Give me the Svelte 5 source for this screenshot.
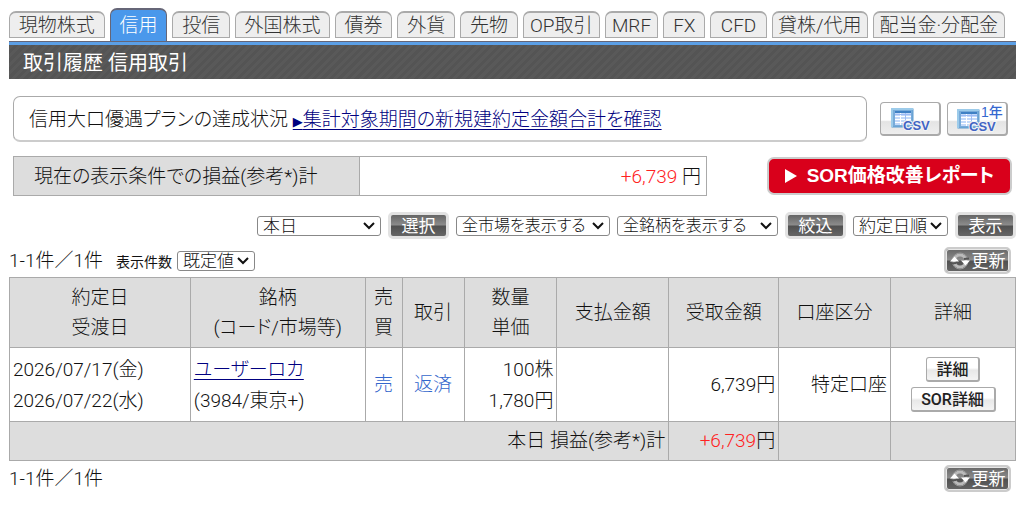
<script>
  const tabs = [
    { label: '現物株式', size: 96 },
    { label: '信用', size: 58, active: true },
    { label: '投信', size: 58 },
    { label: '外国株式', size: 95 },
    { label: '債券', size: 58 },
    { label: '外貨', size: 58 },
    { label: '先物', size: 58 },
    { label: 'OP取引', size: 77 },
    { label: 'MRF', size: 54 },
    { label: 'FX', size: 42 },
    { label: 'CFD', size: 57 },
    { label: '貸株/代用', size: 96 },
    { label: '配当金·分配金', size: 133 }
  ];
  const tabColumns = tabs.map((t) => `${t.size}fr`).join(' ');
  const columns = [181, 175, 37, 62, 93, 112, 110, 112, 125];
  const total = columns.reduce((a, b) => a + b, 0);
</script>

{#snippet refresh()}
  <button class="dark refresh">
    <svg width="20" height="20" viewBox="0 0 20 20" aria-hidden="true">
      <circle cx="10" cy="10" r="6" fill="none" stroke="#bbb" stroke-width="3" />
      <circle cx="10" cy="10" r="8" fill="none" stroke="#999" stroke-width="1" />
      <path d="M0 10.500L4.500 5.500L9 10.500Z M11 9.500L15.500 14.500L20 9.500Z" fill="#fff" />
      <path d="M1 12.500L6 12 M14 8L19 7.500" stroke="#555" stroke-width="2" />
    </svg><span>更新</span>
  </button>
{/snippet}

{#snippet sheet()}
  <rect x="1" y="1" width="21" height="18" fill="#78abd9" stroke="#5d9bd0" />
  <path d="M1 19V1H22" fill="none" stroke="#9ccbea" stroke-width="2" />
  <rect x="4" y="4" width="16" height="13" fill="#c3d9fa" />
  <rect x="4" y="3" width="16" height="2" fill="#3f80c4" />
  <path d="M4 8.500H20M4 11.500H20M4 14.500H20M9.500 5V17" stroke="#fff" />
  <path d="M4 6.500H20M14.500 5V17" stroke="#9fbcf5" />
{/snippet}

<main>
  <nav style:grid-template-columns={tabColumns}>
    {#each tabs as tab}
      <a href="#top" class:active={tab.active}>{tab.label}</a>
    {/each}
  </nav>
  <h1>取引履歴 信用取引</h1>

  <div class="notice">
    <p>信用大口優遇プランの達成状況 <a href="#plan"><span class="arrow">▶</span>集計対象期間の新規建約定金額合計を確認</a></p>
    <button class="csv" aria-label="CSV">
      <svg width="58" height="31" viewBox="0 0 58 31">
        <g transform="translate(10 5)">{@render sheet()}</g>
        <text x="22" y="27" class="csvtext">CSV</text>
      </svg>
    </button>
    <button class="csv" aria-label="1年CSV">
      <svg width="58" height="31" viewBox="0 0 58 31">
        <g transform="translate(9 6)">{@render sheet()}</g>
        <text x="21" y="28" class="csvtext">CSV</text>
        <text x="33" y="14" class="yeartext">1年</text>
      </svg>
    </button>
  </div>

  <div class="summary">
    <dl>
      <dt>現在の表示条件での損益(参考*)計</dt>
      <dd><span class="gain">+6,739</span> 円</dd>
    </dl>
    <a class="report" href="#report"><svg width="12" height="16" viewBox="0 0 12 16" aria-hidden="true"><path d="M0 1L12 8L0 15Z" fill="#fff" /></svg><span>SOR価格改善レポート</span></a>
  </div>

  <form class="filters" onsubmit={(e) => e.preventDefault()}>
    <select class="day" aria-label="期間"><option>本日</option></select>
    <button class="dark">選択</button>
    <select class="market" aria-label="市場"><option>全市場を表示する</option></select>
    <select class="stock" aria-label="銘柄"><option>全銘柄を表示する</option></select>
    <button class="dark">絞込</button>
    <select class="order" aria-label="並び順"><option>約定日順</option></select>
    <button class="dark">表示</button>
  </form>

  <div class="pager top">
    <span>1-1件／1件</span>
    <label for="count">表示件数</label>
    <select id="count" class="count"><option>既定値</option></select>
    {@render refresh()}
  </div>

  <table>
    <colgroup>
      {#each columns as c}
        <col style:width={`${(c / total) * 100}%`} />
      {/each}
    </colgroup>
    <thead>
      <tr>
        <th>約定日<br />受渡日</th>
        <th>銘柄<br />(コード/市場等)</th>
        <th>売<br />買</th>
        <th>取引</th>
        <th>数量<br />単価</th>
        <th>支払金額</th>
        <th>受取金額</th>
        <th>口座区分</th>
        <th>詳細</th>
      </tr>
    </thead>
    <tbody>
      <tr>
        <td>2026/07/17(金)<br />2026/07/22(水)</td>
        <td><a href="#stock">ユーザーロカ</a><br />(3984/東京+)</td>
        <td class="sell">売</td>
        <td class="sell">返済</td>
        <td class="num">100株<br />1,780円</td>
        <td></td>
        <td class="num">6,739円</td>
        <td class="num">特定口座</td>
        <td class="actions"><button class="light">詳細</button><button class="light">SOR詳細</button></td>
      </tr>
    </tbody>
    <tfoot>
      <tr>
        <td colspan="6" class="num">本日 損益(参考*)計</td>
        <td class="num"><span class="gain">+6,739</span>円</td>
        <td></td>
        <td></td>
      </tr>
    </tfoot>
  </table>

  <div class="pager">
    <span>1-1件／1件</span>
    {@render refresh()}
  </div>
</main>

<style>
  :global(body) {
    background: #fff;
  }
  main {
    padding: 8px 8px 0 9px;
    color: #111;
    font: 300 19px/30px Roboto, 'Noto Sans CJK JP', sans-serif;
    font-feature-settings: 'palt';
  }
  main * {
    box-sizing: border-box;
  }
  button,
  select {
    font: inherit;
    font-feature-settings: inherit;
    white-space: nowrap;
  }
  button {
    cursor: pointer;
    padding: 0;
  }
  nav {
    display: grid;
    align-items: end;
    gap: 5px;
    padding-right: 11px;
    height: 33px;
  }
  nav a {
    min-width: 0;
    height: 27px;
    margin-bottom: 3px;
    border: 1px solid #aaa;
    border-top-width: 2px;
    border-radius: 7px 7px 0 0;
    background: #eee;
    color: #333;
    font-size: 19px;
    line-height: 26px;
    text-align: center;
    text-decoration: none;
    white-space: nowrap;
  }
  nav a.active {
    height: 33px;
    margin-bottom: 0;
    padding-top: 3px;
    border-color: #667;
    border-bottom: 0;
    background: #4a98eb;
    color: #fff;
  }
  h1 {
    height: 38px;
    margin: 0;
    padding: 3px 14px 0;
    border-top: 1px solid #667;
    box-shadow: inset 0 3px #5b9fe6;
    background: repeating-linear-gradient(135deg, #545454 0 3px, #595959 3px 6px);
    color: #fff;
    font-size: 20px;
    font-weight: 400;
    line-height: 37px;
  }
  a {
    color: #000080;
    text-decoration-thickness: 1px;
    text-underline-offset: 3px;
  }
  .arrow {
    font: 13px 'DejaVu Sans', sans-serif;
  }
  .notice {
    display: flex;
    align-items: center;
    gap: 6px;
    padding: 17px 8px 0 4px;
  }
  .notice p {
    flex: 1;
    margin: 0 7px 0 0;
    padding: 8px 15px 5px;
    border: 1px solid #aaa;
    border-bottom: 2px solid #ccc;
    border-radius: 7px;
    white-space: nowrap;
  }
  .csv {
    width: 61px;
    height: 34px;
    border: 1px solid #aaa;
    border-right: 2px solid #aaa;
    border-bottom: 2px solid #aaa;
    border-radius: 4px;
    background: linear-gradient(#fff 55%, #e4e4e4 60%, #eee);
  }
  .csv svg {
    display: block;
  }
  .csvtext {
    fill: #4264c4;
    stroke: #f4f4f4;
    stroke-width: 2px;
    paint-order: stroke;
    font: 700 13px 'Liberation Sans', sans-serif;
  }
  .yeartext {
    fill: #3568d0;
    font: 500 14px 'Liberation Sans', 'Noto Sans CJK JP', sans-serif;
  }
  .summary {
    display: flex;
    align-items: center;
    justify-content: space-between;
    padding: 14px 4px 0 4px;
  }
  dl {
    display: flex;
    flex: 0 1 694px;
    margin: 0;
    border: 1px solid #aaa;
    line-height: 36px;
    white-space: nowrap;
  }
  dt,
  dd {
    width: 50%;
    padding: 2px 5px 0 20px;
  }
  dt {
    border-right: 1px solid #aaa;
    background: #ddd;
  }
  dd {
    margin: 0;
    text-align: right;
  }
  .gain {
    color: #f22;
  }
  .report {
    display: flex;
    align-items: center;
    justify-content: center;
    gap: 10px;
    width: 245px;
    height: 38px;
    border: 2px solid #ccc;
    border-radius: 7px;
    background: #d9001b;
    color: #fff;
    font-family: 'Liberation Sans', 'Noto Sans CJK JP', sans-serif;
    font-size: 19px;
    font-weight: 700;
    text-decoration: none;
    white-space: nowrap;
  }
  .filters {
    display: flex;
    align-items: center;
    justify-content: flex-end;
    gap: 7px;
    padding-top: 16px;
  }
  select {
    appearance: none;
    height: 20px;
    padding: 0 16px 0 5px;
    border: 1px solid #888;
    border-radius: 3px;
    background: #fff url("data:image/svg+xml,%3Csvg xmlns='http://www.w3.org/2000/svg' width='14' height='10'%3E%3Cpath d='M2 2L7 7L12 2' fill='none' stroke='%23111' stroke-width='2'/%3E%3C/svg%3E") no-repeat right 4px center;
    color: #111;
    font-size: 17px;
    line-height: 18px;
  }
  .day {
    width: 124px;
  }
  .market {
    width: 154px;
  }
  .stock {
    width: 161px;
  }
  .order {
    width: 95px;
  }
  .count {
    width: 78px;
  }
  .market,
  .stock {
    font-size: 16px;
  }
  .dark {
    display: flex;
    align-items: center;
    justify-content: center;
    width: 61px;
    height: 27px;
    border: 3px solid #e2e2e2;
    border-radius: 5px;
    background: linear-gradient(#666, #8c8c8c 48%, #505050 52%, #666);
    color: #fff;
    font-size: 17px;
    font-weight: 400;
    line-height: 20px;
  }
  .refresh {
    gap: 2px;
    width: 67px;
    margin: 0 5px 0 auto;
    border: 2px solid #ccc;
    box-shadow: inset 0 0 0 1px #e8e8e8;
  }
  .pager {
    display: flex;
    align-items: center;
    height: 37px;
    padding-bottom: 3px;
    white-space: nowrap;
  }
  .pager span {
    padding-top: 1px;
  }
  .pager.top {
    height: 38px;
    padding: 5px 0 0;
  }
  .pager label {
    margin: 0 5px 0 13px;
    padding-top: 2px;
    font-size: 14px;
    font-weight: 400;
  }
  table {
    width: 100%;
    border-collapse: collapse;
    table-layout: fixed;
  }
  th,
  td {
    padding: 0 3px;
    border: 1px solid #aaa;
    white-space: nowrap;
  }
  th {
    height: 70px;
    padding: 1px 0 0;
    background: #ddd;
    font-weight: 300;
    text-align: center;
  }
  tbody td {
    height: 74px;
    line-height: 31px;
  }
  tfoot td {
    height: 39px;
    background: #ddd;
  }
  td.num {
    text-align: right;
  }
  td.sell {
    padding: 0;
    color: #36c;
    text-align: center;
  }
  .actions {
    text-align: center;
  }
  .light {
    display: block;
    width: 54px;
    height: 25px;
    margin: 0 auto 5px;
    border: 1px solid #aaa;
    border-right-width: 2px;
    border-bottom-width: 2px;
    border-radius: 3px;
    background: linear-gradient(#fff 45%, #e8e8e8 55%, #f4f4f4);
    color: #222;
    font-size: 16px;
    font-weight: 500;
    line-height: 21px;
  }
  .light + .light {
    width: 85px;
    margin-bottom: 0;
  }
</style>
